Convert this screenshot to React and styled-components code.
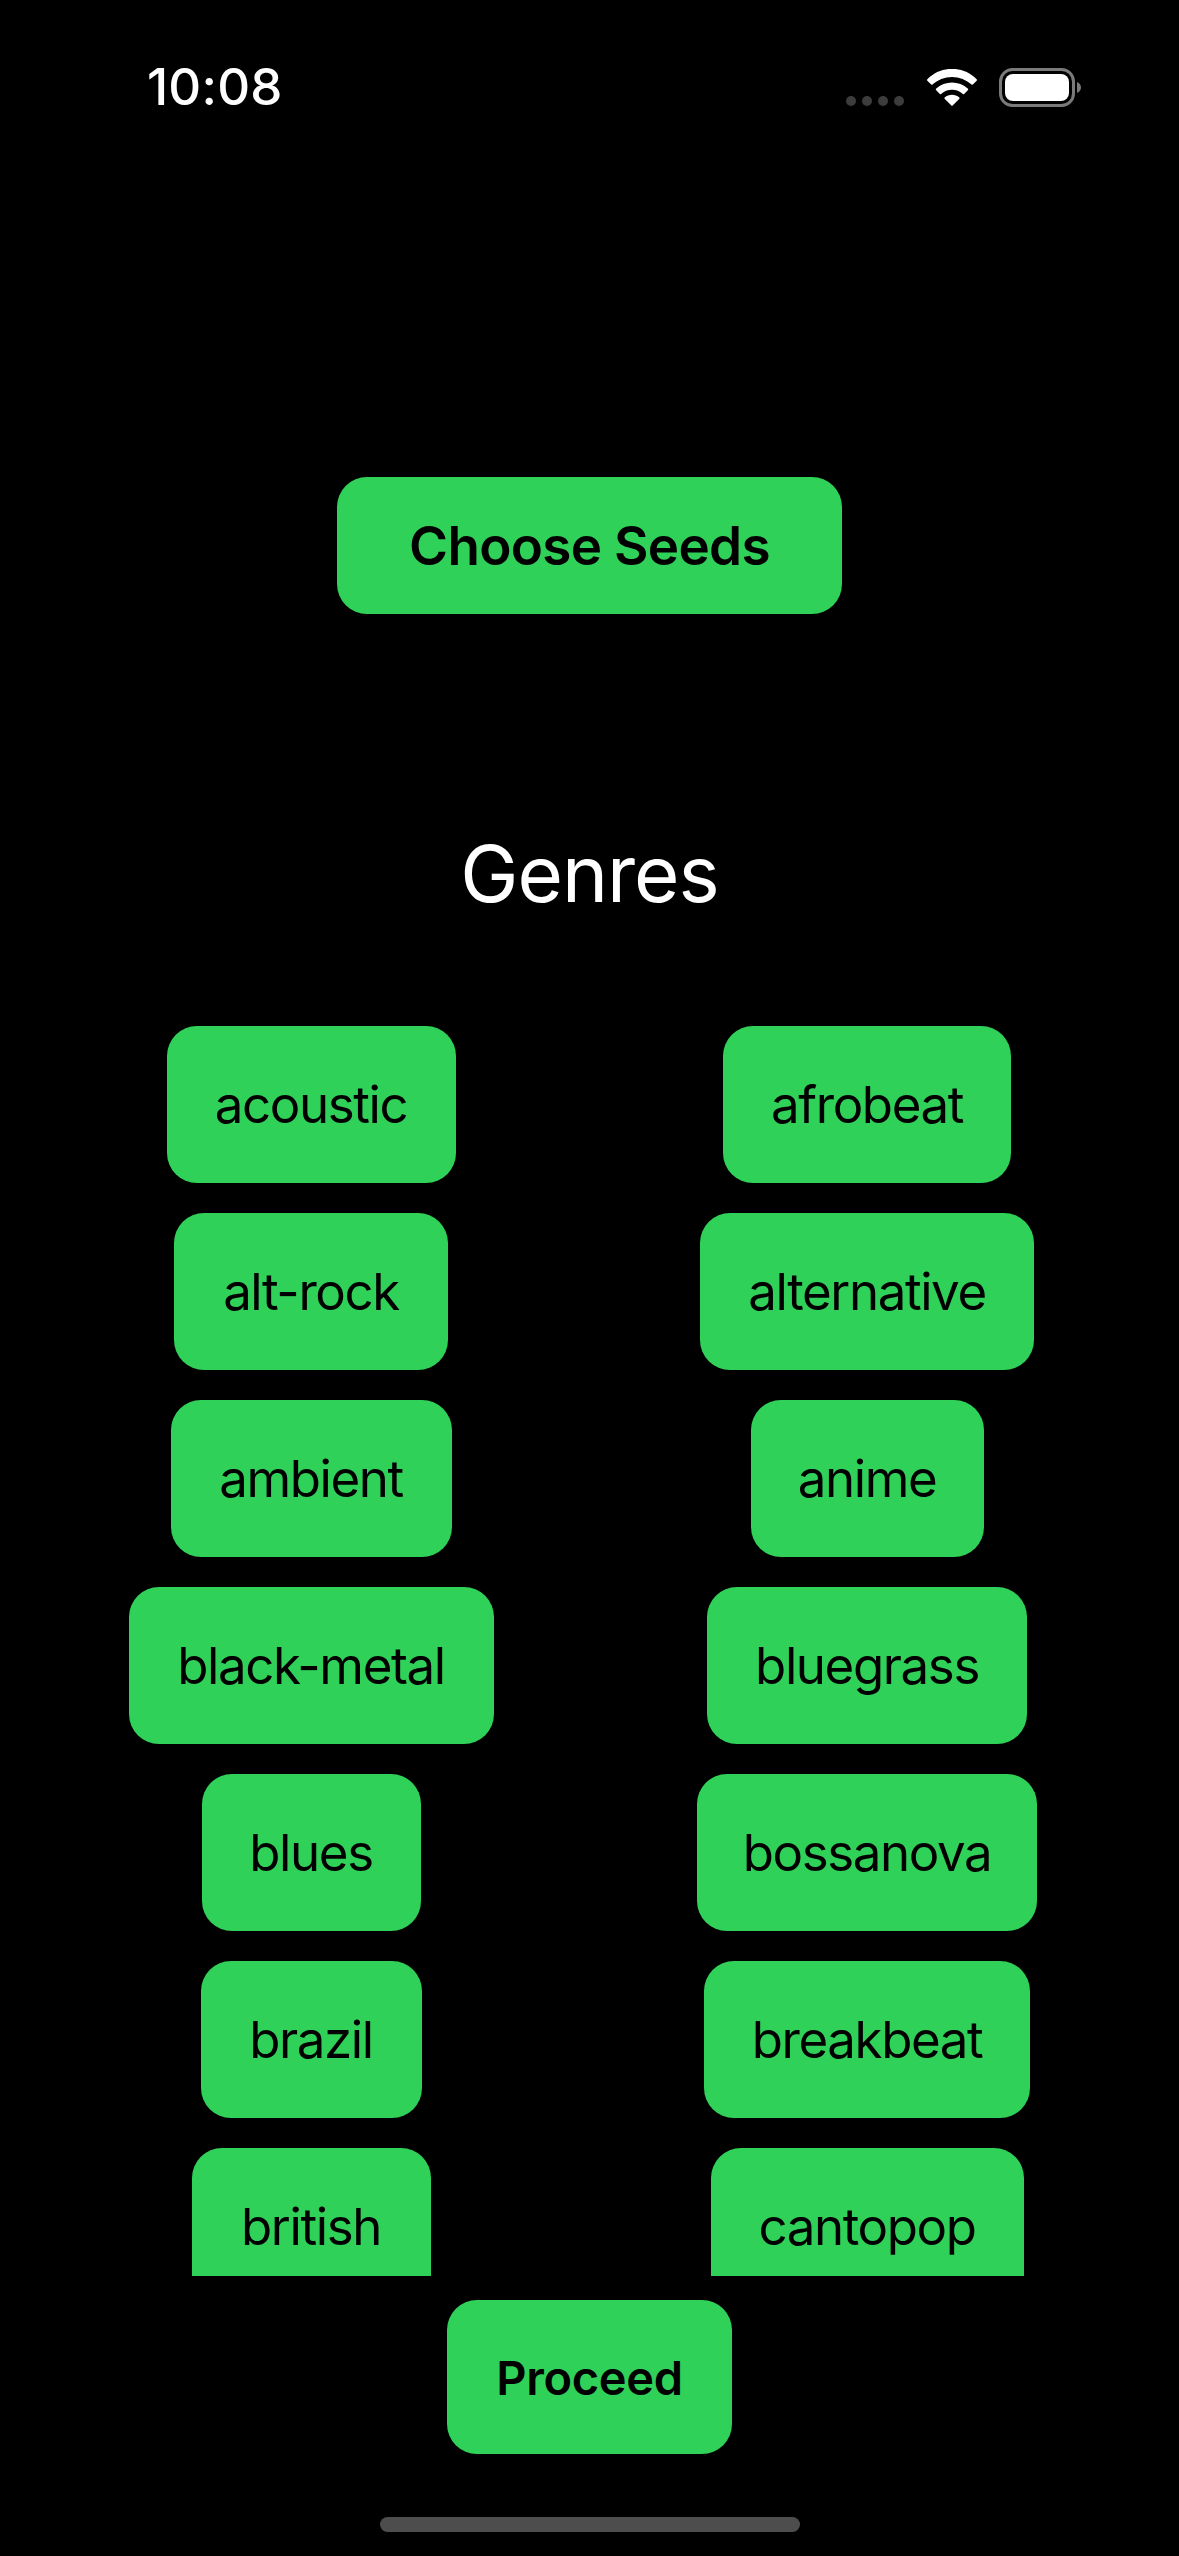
import React from "react";
import styled, { createGlobalStyle } from "styled-components";

const GlobalStyle = createGlobalStyle`
  html, body {
    margin: 0;
    padding: 0;
    background: #000;
  }
`;

const FONT = `Inter, "Liberation Sans", sans-serif`;
const GREEN = "#30d158";

const Screen = styled.div`
  width: 1179px;
  height: 2556px;
  background: #000;
  display: flex;
  flex-direction: column;
  align-items: center;
  font-family: ${FONT};
  overflow: hidden;
`;

const StatusBar = styled.div`
  width: 100%;
  box-sizing: border-box;
  height: 141px;
  padding: 68px 98px 0 147px;
  display: flex;
  justify-content: space-between;
  align-items: flex-start;
`;

const Time = styled.div`
  color: #fff;
  font-size: 51px;
  font-weight: 550;
  line-height: 38px;
  letter-spacing: 0.2px;
`;

const Indicators = styled.div`
  display: flex;
  align-items: flex-end;
`;

const Dots = styled.div`
  display: flex;
  gap: 6px;
  margin: 0 23px 1px 0;
`;

const Dot = styled.span`
  width: 10px;
  height: 10px;
  border-radius: 50%;
  background: #3c3c3c;
`;

const WifiIcon = styled.svg`
  width: 50px;
  height: 37px;
  margin: 0 22px 1px 0;
  display: block;
`;

const BatteryIcon = styled.svg`
  width: 82px;
  height: 39px;
  display: block;
`;

const SeedsButton = styled.div`
  margin-top: 336px;
  width: 505px;
  height: 137px;
  border-radius: 30px;
  background: ${GREEN};
  color: #000;
  display: flex;
  align-items: center;
  justify-content: center;
  font-size: 53px;
  font-weight: 600;
  letter-spacing: -0.7px;
`;

const Heading = styled.h1`
  margin: 198px 0 0;
  height: 124px;
  line-height: 124px;
  color: #fff;
  font-size: 78px;
  font-weight: 400;
  letter-spacing: -1px;
`;

const GenreList = styled.div`
  margin-top: 90px;
  width: 100%;
  height: 1250px;
  box-sizing: border-box;
  padding: 0 34px 0 33px;
  overflow: hidden;
  display: grid;
  grid-template-columns: 1fr 1fr;
  grid-auto-rows: 157px;
  row-gap: 30px;
  justify-items: center;
`;

const GenreButton = styled.div`
  width: ${(props) => props.$width}px;
  height: 157px;
  border-radius: 30px;
  background: ${GREEN};
  color: #000;
  display: flex;
  align-items: center;
  justify-content: center;
  font-size: 51px;
  font-weight: 400;
  letter-spacing: -1.4px;
`;

const ProceedButton = styled.div`
  margin-top: 24px;
  width: 285px;
  height: 154px;
  border-radius: 30px;
  background: ${GREEN};
  color: #000;
  display: flex;
  align-items: center;
  justify-content: center;
  font-size: 47px;
  font-weight: 600;
  letter-spacing: -0.3px;
`;

const HomeIndicator = styled.div`
  margin-top: 63px;
  width: 420px;
  height: 15px;
  border-radius: 8px;
  background: #4d4d4d;
`;

const genres = [
  ["acoustic", 289],
  ["afrobeat", 288],
  ["alt-rock", 274],
  ["alternative", 334],
  ["ambient", 281],
  ["anime", 233],
  ["black-metal", 365],
  ["bluegrass", 320],
  ["blues", 219],
  ["bossanova", 340],
  ["brazil", 221],
  ["breakbeat", 326],
  ["british", 239],
  ["cantopop", 313],
];

export default function App() {
  return (
    <Screen>
      <GlobalStyle />
      <StatusBar>
        <Time>10:08</Time>
        <Indicators>
          <Dots>
            <Dot />
            <Dot />
            <Dot />
            <Dot />
          </Dots>
          <WifiIcon viewBox="0.7 0.15 15.6 11.5">
            <path
              fill="#fff"
              d="M8.5 2.6C10.8 2.6 13 3.5 14.6 5C14.7 5.1 14.9 5.1 15 5L16.2 3.8C16.3 3.7 16.3 3.4 16.2 3.3C11.9 -1 5.1 -1 0.8 3.3C0.7 3.4 0.7 3.7 0.8 3.8L2 5C2.1 5.1 2.3 5.1 2.4 5C4 3.5 6.2 2.6 8.5 2.6Z"
            />
            <path
              fill="#fff"
              d="M8.5 6.6C9.8 6.6 11 7.1 11.9 7.9C12 8 12.2 8 12.3 7.9L13.5 6.7C13.6 6.6 13.6 6.4 13.5 6.3C10.7 3.7 6.3 3.7 3.5 6.3C3.4 6.4 3.4 6.6 3.5 6.7L4.7 7.9C4.8 8 5 8 5.1 7.9C6 7.1 7.2 6.6 8.5 6.6Z"
            />
            <path
              fill="#fff"
              d="M10.8 9.4C10.9 9.3 10.9 9.1 10.8 9C9.5 7.9 7.5 7.9 6.2 9C6.1 9.1 6.1 9.3 6.2 9.4L8.3 11.5C8.4 11.6 8.6 11.6 8.7 11.5Z"
            />
          </WifiIcon>
          <BatteryIcon viewBox="0 0 82 39">
            <rect x="1.5" y="1.5" width="73" height="36" rx="12" fill="none" stroke="#7a7a7a" strokeWidth="3" />
            <rect x="6" y="6" width="64" height="27" rx="8" fill="#fff" />
            <path d="M78 14C80.5 15 82 17 82 19.5C82 22 80.5 24 78 25Z" fill="#7a7a7a" />
          </BatteryIcon>
        </Indicators>
      </StatusBar>
      <SeedsButton>Choose Seeds</SeedsButton>
      <Heading>Genres</Heading>
      <GenreList>
        {genres.map(([name, width]) => (
          <GenreButton key={name} $width={width}>
            {name}
          </GenreButton>
        ))}
      </GenreList>
      <ProceedButton>Proceed</ProceedButton>
      <HomeIndicator />
    </Screen>
  );
}
